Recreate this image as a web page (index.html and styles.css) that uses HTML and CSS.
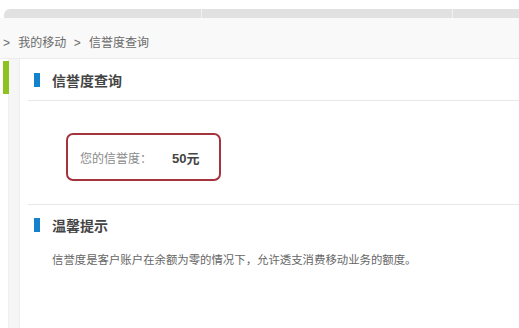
FILE: index.html
```html
<!DOCTYPE html>
<html lang="zh-CN">
    <head>
        <meta charset="UTF-8">
        <title>信誉度查询</title>
        <link rel="stylesheet" href="styles.css">
    </head>
    <body>
        <div class="top_bar">
            <div class="tab tab_first"></div>
            <div class="tab tab_mid"></div>
            <div class="tab tab_last"></div>
        </div>
        <div class="crumbs">
            <span class="arrow">&gt;</span>
            <a href="#">我的移动</a>
            <span class="arrow">&gt;</span>
            <span>信誉度查询</span>
        </div>
        <div class="main">
            <div class="side">
                <div class="side_mark"></div>
            </div>
            <div class="panel">
                <div class="panel_title">
                    <span class="mark"></span>
                    <span>信誉度查询</span>
                </div>
                <div class="credit_area">
                    <div class="credit_box">
                        <span class="credit_label">您的信誉度：</span>
                        <span class="credit_value">50元</span>
                    </div>
                </div>
                <div class="panel_title tips_title">
                    <span class="mark"></span>
                    <span>温馨提示</span>
                </div>
                <p class="tips_text">信誉度是客户账户在余额为零的情况下，允许透支消费移动业务的额度。</p>
            </div>
        </div>
    </body>
</html>
```

FILE: styles.css
```css
* {
    margin: 0;
    padding: 0;
    box-sizing: border-box;
}

body {
    background-color: white;
    font-family: "Liberation Sans", "Noto Sans CJK SC", sans-serif;
    width: 519px;
    height: 328px;
    overflow: hidden;
}

.top_bar {
    display: flex;
    height: 9px;
    margin: 9px 0 0 4px;
    background-color: #e1e1e1;
    border-radius: 6px 0 0 0;
}

.tab_first {
    width: 198px;
    border-right: 1px solid #f2f2f2;
}

.tab_mid {
    width: 251px;
    border-right: 1px solid #f2f2f2;
}

.tab_last {
    flex: 1;
}

.crumbs {
    height: 41px;
    background-color: #f9f9f9;
    border-bottom: 1px solid #ececec;
    padding: 15px 0 0 3px;
    font-size: 12px;
    color: #6a6a6a;
}

.crumbs a {
    color: #6a6a6a;
    text-decoration: none;
}

.crumbs .arrow {
    margin: 0 5px 0 0;
}

.crumbs a + .arrow {
    margin-left: 4px;
}

.main {
    display: flex;
    height: 269px;
}

.side {
    width: 20px;
    background: linear-gradient(to right, white 8px, #e9e9e9 8px, #f6f6f6 9px, #f6f6f6 19px, #ededed 19px);
    padding-top: 2px;
}

.side_mark {
    width: 6px;
    height: 33px;
    margin-left: 3px;
    background-color: #8dc21f;
}

.panel {
    flex: 1;
    padding-left: 8px;
}

.panel_title {
    display: flex;
    align-items: center;
    height: 42px;
    border-bottom: 1px solid #e8e8e8;
    padding-left: 6px;
    font-size: 14px;
    font-weight: bold;
    color: #444;
}

.mark {
    width: 6px;
    height: 14px;
    background-color: #1580cc;
    margin-right: 12px;
}

.credit_area {
    height: 104px;
    border-bottom: 1px solid #e8e8e8;
    padding: 32px 0 0 38px;
}

.credit_box {
    display: flex;
    align-items: center;
    width: 155px;
    height: 48px;
    border: 2px solid #a3333d;
    border-radius: 7px;
    padding-left: 12px;
}

.credit_label {
    font-size: 12px;
    color: #8a8a8a;
}

.credit_value {
    margin-left: 20px;
    font-size: 13px;
    font-weight: bold;
    color: #444;
}

.tips_title {
    height: 40px;
    border-bottom: none;
}

.tips_text {
    padding: 6px 0 0 24px;
    font-size: 11.4px;
    color: #666;
}
```
